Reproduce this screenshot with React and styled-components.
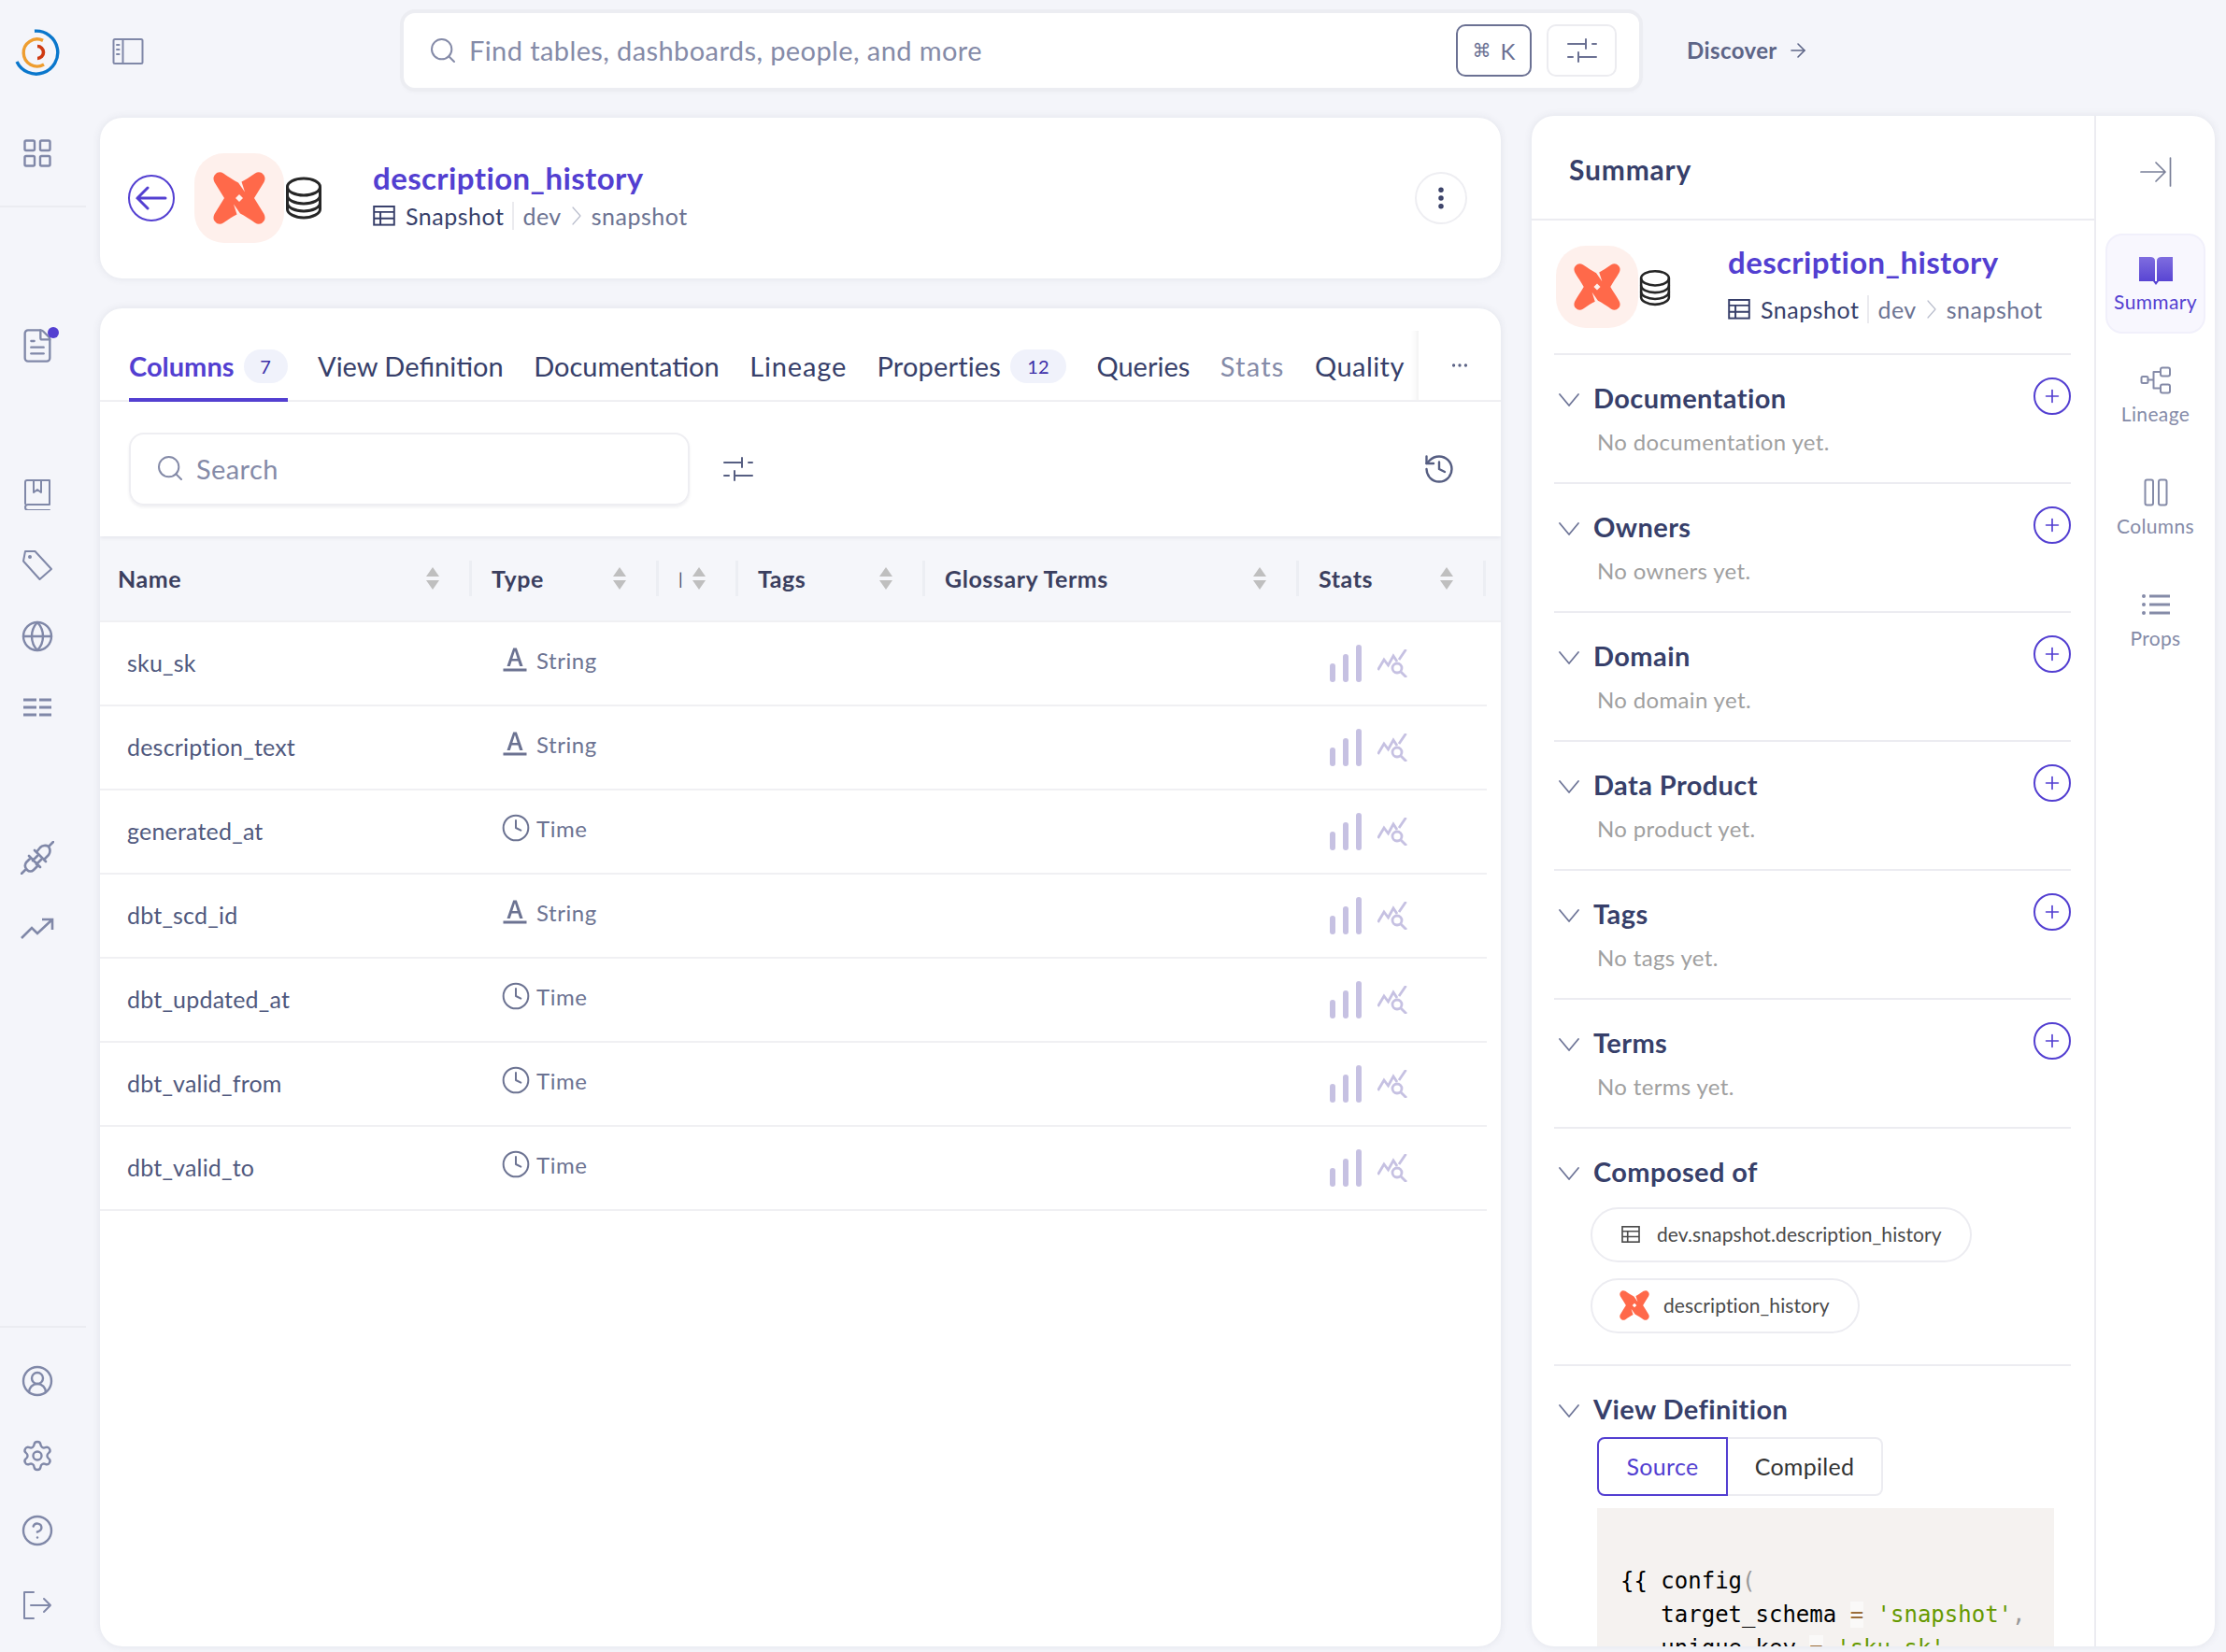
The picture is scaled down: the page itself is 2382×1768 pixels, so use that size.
import React from 'react';
import styled, {createGlobalStyle} from 'styled-components';
import {AiOutlineFontColors} from 'react-icons/ai';
import {ArrowRight, CircleHelp, CircleUserRound, Clock, Ellipsis, EllipsisVertical, FileText, Globe, History, LayoutGrid, Plus, Search, Settings} from 'lucide-react';

const PRIMARY = '#533fd1';
const INK = '#373f6a';
const ICON = '#8088a8';
const LINE = '#f0f0f3';
const COLUMNS = '398px 200px 85px 200px 400px 200px';
const UI_FONT = '"Lato", "Noto Sans", sans-serif';

const GlobalStyle = createGlobalStyle`
    html, body { margin: 0; padding: 0; background: #f4f5fa; }
    body { font-family: ${UI_FONT}; }
    * { box-sizing: border-box; }
`;

const Stroke = ({size = 32, w, h, width = 2, color = 'currentColor', cap = 'round', join = 'round', children, view = '0 0 32 32'}) => (
    <svg width={w || size} height={h || size} viewBox={view} fill="none" stroke={color} strokeWidth={width} strokeLinecap={cap} strokeLinejoin={join}>{children}</svg>
);

const DbtMark = ({size = 56}) => (
    <svg width={size} height={size} viewBox="0 0 56 56" fill="#ff694a" fillRule="evenodd">
        <path d="M2.5 2.500C4.500 0 8 -.5 11 1.500C17 5.500 22 9 27 11.500L34 21.500L30.500 10.500C35 8.500 39 5.500 45 1.500C48 -.5 51.500 0 53.500 2.500C56 5 56 8 54.500 11C51 17 47.500 22 44 28C47.500 34 51 39 54.500 45C56 48 56 51 53.500 53.500C51.500 56 48 56.500 45 54.500C39 50.500 34 47 29 44.500L22 34.500L25.500 45.500C21 47.500 17 50.500 11 54.500C8 56.500 4.500 56 2.500 53.500C0 51 0 48 1.500 45C5 39 8.500 34 12 28C8.500 22 5 17 1.500 11C0 8 0 5 2.500 2.500ZM28 24L32 28L28 32L24 28Z"/>
    </svg>
);
const Logo = () => (
    <svg width="50" height="50" viewBox="0 0 50 50" fill="none" strokeLinecap="butt">
        <path d="M22 2.200 A23 23 0 1 1 3 35" stroke="#0a77cc" strokeWidth="3.4"/>
        <path d="M31 12.400 A14.500 14.500 0 1 0 32 38" stroke="#ee9d2f" strokeWidth="3.4"/>
        <path d="M25 18.500 A6.500 6.500 0 0 1 25 31.500" stroke="#cf3a12" strokeWidth="3.6"/>
    </svg>
);
const PanelIcon = () => (
    <Stroke w={34} h={30} view="0 0 34 30">
        <rect x="1.500" y="2" width="31" height="26" rx="1.500"/>
        <path d="M11.500 2v26M5 8h2.500M5 13h2.500M5 18h2.500"/>
    </Stroke>
);
const SavedIcon = () => (
    <Stroke w={30} h={34} view="0 0 30 34">
        <path d="M2 27V4a2 2 0 0 1 2-2h24v26H5a3 3 0 0 0 0 6h23"/>
        <path d="M11 3v12l4-3 4 3V3"/>
    </Stroke>
);
const TagIcon = () => (
    <Stroke w={36} h={36} view="0 0 36 36">
        <path d="M5 3h10.500L33 22 20.500 33 3 13.500Z"/>
        <circle cx="10" cy="9" r="1"/>
    </Stroke>
);
const GlossaryIcon = () => (
    <Stroke w={30} h={20} view="0 0 30 20" width={2.8} cap="butt">
        <path d="M0 2h14M17 2h13M0 10h14M17 10h13M0 18h14M17 18h13"/>
    </Stroke>
);
const PlugIcon = () => (
    <Stroke w={36} h={36} view="0 0 36 36" width={2.6}>
        <path d="M9 16L21 28M11 18L6 23C4 26 5 29 7 31C9 33 12 33 14 31L19 26M1 35L6 30M13 21L18 16M17 25L22 20"/>
        <path d="M15 10L27 22M17 12L21 7C23 5 27 4 30 6C32 9 32 12 30 15L25 20M35 1L30 6"/>
    </Stroke>
);
const TrendIcon = () => (
    <Stroke w={36} h={24} view="0 0 36 24" width={2.6} join="miter" cap="butt">
        <path d="M1 22L12 11L18 17L34 2M23 2H34V13"/>
    </Stroke>
);
const LogoutIcon = () => (
    <Stroke w={32} h={32} view="0 0 32 32">
        <path d="M12 2H2v28h10M9 16h21M23 9l7 7-7 7"/>
    </Stroke>
);
const Database = ({w = 40, h = 46}) => (
    <svg width={w} height={h} viewBox="0 0 40 46" fill="none" stroke="#262626" strokeWidth="3">
        <ellipse cx="20" cy="11" rx="17.500" ry="9"/>
        <path d="M2.500 11v24c0 4.400 7.800 9 17.500 9s17.500-4.600 17.500-9V11"/>
        <path d="M2.500 20c0 5 7.800 9 17.500 9s17.500-4 17.500-9M2.500 28c0 5 7.800 9 17.500 9s17.500-4 17.500-9"/>
    </svg>
);
const TableIcon = ({size = 24}) => (
    <svg width={size} height={size * 0.9} viewBox="0 0 24 22" fill="none" stroke="currentColor" strokeWidth="2">
        <rect x="1" y="1" width="22" height="20"/>
        <path d="M1 7h22M1 14h22M8 7v14"/>
    </svg>
);
const SliderIcon = () => (
    <Stroke w={32} h={26} view="0 0 32 26">
        <path d="M1 6h19M20 1v10M27 6h4M1 20h5M12 15v10M12 20h19"/>
    </Stroke>
);
const Crumb = () => (
    <Stroke w={10} h={20} view="0 0 10 20" width={1.200} color="#b9bdcc">
        <path d="M1 1l8 9-8 9"/>
    </Stroke>
);
const SortCaret = () => (
    <svg width="16" height="24" viewBox="0 0 16 24" fill="#bfbfbf">
        <path d="M8 0l7 10H1ZM8 24L1 14h14Z"/>
    </svg>
);
const BarsIcon = () => (
    <svg width="34" height="40" viewBox="0 0 34 40" fill="#c6c1e2">
        <rect x="0" y="20" width="6" height="20" rx="3"/>
        <rect x="14" y="10" width="6" height="30" rx="3"/>
        <rect x="28" y="0" width="6" height="40" rx="3"/>
    </svg>
);
const ProfileIcon = () => (
    <Stroke w={32} h={30} view="0 0 32 30" width={2.800} color="#c6c1e2" cap="butt" join="miter">
        <path d="M.5 22L7 11l4.500 6L17 7l4 6M23 11l7.500-11"/>
        <circle cx="21" cy="20" r="5"/>
        <path d="M25 24l6 6"/>
    </Stroke>
);
const Chevron = () => (
    <Stroke w={22} h={14} view="0 0 22 14" width={1.800} color="#6f7698">
        <path d="M1 1l10 12L21 1"/>
    </Stroke>
);
const BookFill = () => (
    <svg width="36" height="30" viewBox="0 0 36 30">
        <defs>
            <linearGradient id="bookFill" x1="0" y1="0" x2="0" y2="1">
                <stop offset="0" stopColor="#7f6ddf"/>
                <stop offset="1" stopColor={PRIMARY}/>
            </linearGradient>
        </defs>
        <path fill="url(#bookFill)" d="M0 0h12c3 0 5 1.500 5 4v22H0ZM36 0H24c-3 0-5 1.500-5 4v22h17ZM15 26h6l-3 4Z"/>
    </svg>
);
const LineageIcon = () => (
    <Stroke w={34} h={30} view="0 0 34 30">
        <rect x="1.500" y="11" width="7" height="7" rx="1.500"/>
        <rect x="22" y="1.500" width="10" height="9" rx="2"/>
        <rect x="22" y="19.500" width="10" height="9" rx="2"/>
        <path d="M8.500 14.500h6M14.500 6v17.500M14.500 6H22M14.500 23.500H22"/>
    </Stroke>
);
const ColumnsIcon = () => (
    <Stroke w={26} h={30} view="0 0 26 30">
        <rect x="1.500" y="1.500" width="8.500" height="27" rx="2"/>
        <rect x="16" y="1.500" width="8.500" height="27" rx="2"/>
    </Stroke>
);
const PropsIcon = () => (
    <svg width="30" height="22" viewBox="0 0 30 22" fill="currentColor">
        <circle cx="2" cy="2" r="2"/>
        <circle cx="2" cy="11" r="2"/>
        <circle cx="2" cy="20" r="2"/>
        <rect x="8" y=".5" width="22" height="3"/>
        <rect x="8" y="9.500" width="22" height="3"/>
        <rect x="8" y="18.500" width="22" height="3"/>
    </svg>
);
const CollapseIcon = () => (
    <Stroke w={34} h={32} view="0 0 34 32" width={1.700}>
        <path d="M1 16h26M17 6l10 10-10 10M32.500 1v30"/>
    </Stroke>
);

const Page = styled.div`
    display: flex;
    width: 2382px;
    height: 1768px;
    overflow: hidden;
    background: #f4f5fa;
`;
const Sidebar = styled.nav`
    flex: 0 0 107px;
    display: flex;
    flex-direction: column;
    color: ${ICON};
`;
const LogoCell = styled.div`
    flex: 0 0 112px;
    width: 80px;
    display: flex;
    align-items: center;
    justify-content: center;
`;
const SideItem = styled.div`
    flex: 0 0 ${props => props.$h || 76}px;
    width: 80px;
    display: flex;
    align-items: center;
    justify-content: center;
    margin-top: ${props => props.$top || 0}px;
`;
const SideRule = styled.hr`
    width: 92px;
    height: 2px;
    border: 0;
    flex: 0 0 2px;
    margin: ${props => props.$top || 0}px 0 ${props => props.$bottom || 0}px;
    background: #ebecf1;
`;
const SideSpacer = styled.div`
    flex: 1;
`;
const SideFoot = styled.div`
    flex: 0 0 10px;
`;
const DotWrap = styled.span`
    position: relative;
    display: flex;
`;
const Dot = styled.span`
    position: absolute;
    top: 0;
    right: -3px;
    width: 12px;
    height: 12px;
    border-radius: 50%;
    background: ${PRIMARY};
`;

const Body = styled.div`
    flex: 1;
    min-width: 0;
    display: flex;
    flex-direction: column;
`;
const TopBar = styled.header`
    flex: 0 0 124px;
    display: flex;
    align-items: flex-start;
    padding-top: 14px;
`;
const PanelToggle = styled.div`
    margin: 26px 278px 0 13px;
    color: ${ICON};
    display: flex;
`;
const GlobalSearch = styled.div`
    width: 1322px;
    height: 80px;
    display: flex;
    align-items: center;
    padding: 0 24px 0 26px;
    background: #fff;
    border-radius: 12px;
    box-shadow: 0 0 0 4px #ecedf2, 0 3px 6px rgba(60, 64, 90, .06);
    color: #858ba8;
`;
const SearchText = styled.span`
    flex: 1;
    margin-left: 12px;
    padding-bottom: 2px;
    font-size: 29px;
    letter-spacing: .4px;
    color: #858ba8;
`;
const Shortcut = styled.span`
    width: 81px;
    height: 56px;
    display: flex;
    align-items: center;
    justify-content: center;
    gap: 10px;
    border: 2px solid #6b7193;
    border-radius: 10px;
    font-size: 24px;
    color: #6b7193;
`;
const ShortcutGlyph = styled.span`
    font-family: "DejaVu Sans", sans-serif;
    font-size: 20px;
`;
const FilterButton = styled.span`
    width: 75px;
    height: 56px;
    margin-left: 16px;
    display: flex;
    align-items: center;
    justify-content: center;
    border: 2px solid #ececf0;
    border-radius: 10px;
    color: #6b7193;
`;
const Discover = styled.div`
    margin: 25px 0 0 51px;
    display: flex;
    align-items: center;
    gap: 10px;
    font-size: 24px;
    font-weight: 700;
    letter-spacing: .4px;
    color: #5d6587;
`;

const Content = styled.div`
    flex: 1;
    min-height: 0;
    display: flex;
    gap: 33px;
    padding: 0 12px 6px 0;
`;
const LeftColumn = styled.main`
    flex: 0 0 1499px;
    display: flex;
    flex-direction: column;
    gap: 32px;
    padding-top: 2px;
`;
const Card = styled.section`
    background: #fff;
    border-radius: 24px;
    box-shadow: 0 0 8px rgba(60, 64, 90, .1);
`;
const HeaderCard = styled(Card)`
    flex: 0 0 172px;
    display: flex;
    align-items: center;
    padding: 0 36px 0 30px;
`;
const BackButton = styled.span`
    flex: 0 0 50px;
    height: 50px;
    display: flex;
    align-items: center;
    justify-content: center;
    border: 2px solid ${PRIMARY};
    border-radius: 50%;
    color: ${PRIMARY};
`;
const LogoTile = styled.span`
    flex: 0 0 ${props => props.$size || 96}px;
    height: ${props => props.$size || 96}px;
    margin-left: ${props => props.$left || 0}px;
    display: flex;
    align-items: center;
    justify-content: center;
    border-radius: 32px;
    background: #fef0ec;
`;
const DbBox = styled.span`
    flex: 0 0 auto;
    display: flex;
    margin-left: 1px;
    margin-top: ${props => props.$top || 0}px;
`;
const EntityText = styled.div`
    margin-left: ${props => props.$left}px;
    margin-top: ${props => props.$top || 0}px;
    padding-bottom: ${props => props.$bottom || 0}px;
    flex: 1;
`;
const EntityName = styled.div`
    font-size: 33px;
    font-weight: 700;
    line-height: 42px;
    letter-spacing: .4px;
    color: ${PRIMARY};
`;
const Crumbs = styled.div`
    display: flex;
    align-items: center;
    height: 36px;
    margin-top: ${props => props.$top || 0}px;
    font-size: 25px;
    letter-spacing: .5px;
    color: #6c7392;
`;
const CrumbKind = styled.span`
    display: flex;
    align-items: center;
    gap: 11px;
    padding-right: 9px;
    border-right: 2px solid #ebebef;
    margin-right: 9px;
    color: ${INK};
`;
const CrumbGap = styled.span`
    margin: 0 11px;
    display: flex;
`;
const KebabButton = styled.span`
    flex: 0 0 56px;
    height: 56px;
    display: flex;
    align-items: center;
    justify-content: center;
    border: 2px solid #eeeef2;
    border-radius: 50%;
    color: #3a4168;
`;

const MainCard = styled(Card)`
    flex: 1;
    min-height: 0;
    overflow: hidden;
`;
const TabBar = styled.div`
    height: 100px;
    display: flex;
    align-items: flex-end;
    border-bottom: 2px solid ${LINE};
`;
const TabList = styled.div`
    width: 1411px;
    height: 74px;
    display: flex;
    gap: 32.500px;
    padding-left: 31px;
    box-shadow: inset -10px 0 10px -10px rgba(0, 0, 0, .1);
`;
const Tab = styled.div`
    display: flex;
    align-items: center;
    gap: 10px;
    height: 76px;
    padding-top: 3px;
    font-size: 29px;
    letter-spacing: ${props => props.$track || 0}px;
    font-weight: ${props => props.$active ? 700 : 400};
    color: ${props => props.$active ? PRIMARY : props.$muted ? '#858ba8' : INK};
    border-bottom: 4px solid ${props => props.$active ? PRIMARY : 'transparent'};
`;
const TabCount = styled.span`
    min-width: ${props => props.$wide ? 60 : 47}px;
    height: 36px;
    display: flex;
    align-items: center;
    justify-content: center;
    border-radius: 18px;
    background: #f0f2fb;
    font-size: 20px;
    font-weight: 400;
    letter-spacing: 0;
    color: #3d2fa8;
`;
const TabMore = styled.div`
    flex: 1;
    height: 74px;
    display: flex;
    align-items: center;
    justify-content: center;
    color: #565e82;
`;
const SearchRow = styled.div`
    height: 144px;
    display: flex;
    align-items: center;
    padding: 0 48px 0 31px;
    box-shadow: 0 2px 4px rgba(60, 64, 90, .08);
    position: relative;
`;
const SearchBox = styled.div`
    width: 600px;
    height: 78px;
    display: flex;
    align-items: center;
    gap: 12px;
    padding: 0 0 2px 26px;
    border: 2px solid #eeeef2;
    border-radius: 16px;
    box-shadow: 0 2px 3px rgba(60, 64, 90, .08);
    font-size: 29px;
    letter-spacing: .4px;
    color: #858ba8;
`;
const SliderBox = styled.div`
    margin-left: 36px;
    display: flex;
    color: #565e82;
`;
const HistoryBox = styled.div`
    margin-left: auto;
    display: flex;
    color: #565e82;
`;
const HeadRow = styled.div`
    height: 92px;
    display: grid;
    grid-template-columns: ${COLUMNS} 1fr;
    align-items: center;
    background: #f5f6fa;
    border-bottom: 2px solid ${LINE};
`;
const HeadCell = styled.div`
    display: flex;
    align-items: center;
    height: 38px;
    padding-left: ${props => props.$left || 21}px;
    font-size: 25px;
    letter-spacing: .55px;
    color: #3b3f5f;
`;
const HeadLabel = styled.span`
    flex: 1;
    font-weight: ${props => props.$thin ? 400 : 700};
    font-size: ${props => props.$thin ? 18 : 25}px;
`;
const HeadDivider = styled.span`
    width: 3px;
    height: 38px;
    margin-left: 31px;
    background: #eceef3;
`;
const Row = styled.div`
    width: 1484px;
    height: 90px;
    display: grid;
    grid-template-columns: ${COLUMNS};
    align-items: center;
    border-bottom: 2px solid ${LINE};
`;
const NameCell = styled.div`
    padding: 0 0 2px 29px;
    font-size: 25px;
    letter-spacing: .2px;
    color: #50597e;
`;
const TypeCell = styled.div`
    display: flex;
    align-items: center;
    gap: ${props => props.$clock ? 6 : 7}px;
    padding: 0 0 8px ${props => props.$clock ? 31 : 30}px;
    font-size: 24px;
    letter-spacing: .55px;
    color: #6c7392;
`;
const StatCell = styled.div`
    grid-column: 6;
    display: flex;
    align-items: center;
    gap: 17px;
    padding-left: 33px;
`;

const SidePanel = styled(Card)`
    flex: 1;
    min-width: 0;
    display: flex;
    overflow: hidden;
`;
const SummaryColumn = styled.div`
    flex: 0 0 604px;
    border-right: 2px solid #ececf1;
    overflow: hidden;
`;
const SummaryHead = styled.div`
    height: 112px;
    display: flex;
    align-items: center;
    padding: 3px 0 0 40px;
    border-bottom: 2px solid #ececf1;
    font-size: 30px;
    font-weight: 700;
    letter-spacing: .8px;
    color: ${INK};
`;
const SummaryBody = styled.div`
    padding: 0 25px 0 24px;
`;
const EntityRow = styled.div`
    height: 144px;
    display: flex;
    align-items: flex-start;
    padding-top: 27px;
    border-bottom: 2px solid #ececf1;
`;
const EntityIcons = styled.div`
    display: flex;
    padding-left: 2px;
`;
const Block = styled.div`
    height: ${props => props.$h ? `${props.$h}px` : 'auto'};
    padding-top: 24px;
    border-bottom: ${props => props.$last ? 0 : '2px solid #ececf1'};
`;
const BlockHead = styled.div`
    height: 40px;
    display: flex;
    align-items: center;
    padding-left: 5px;
`;
const ChevronBox = styled.span`
    display: flex;
    margin-top: 7px;
`;
const BlockTitle = styled.h3`
    flex: 1;
    margin: 3px 0 0 15px;
    font-size: 29px;
    font-weight: 700;
    letter-spacing: .4px;
    color: ${INK};
`;
const AddButton = styled.span`
    flex: 0 0 40px;
    height: 40px;
    display: flex;
    align-items: center;
    justify-content: center;
    border: 2px solid ${PRIMARY};
    border-radius: 50%;
    color: ${PRIMARY};
`;
const EmptyText = styled.p`
    margin: 14px 0 0 46px;
    font-size: 24px;
    line-height: 30px;
    letter-spacing: .35px;
    color: #a0a0a0;
`;
const ChipList = styled.div`
    display: flex;
    flex-direction: column;
    align-items: flex-start;
    gap: 17px;
    margin-top: 20px;
    padding: 0 0 33px 39px;
`;
const Chip = styled.div`
    height: 59px;
    display: flex;
    align-items: center;
    gap: ${props => props.$gap}px;
    padding: 0 ${props => props.$right}px 2px ${props => props.$left}px;
    border: 2px solid #ececf1;
    border-radius: 30px;
    font-size: 21px;
    letter-spacing: .1px;
    color: #4a4a4a;
`;
const Toggle = styled.div`
    display: flex;
    height: 63px;
    margin: 12px 0 0 46px;
`;
const ToggleItem = styled.div`
    width: ${props => props.$w}px;
    display: flex;
    align-items: center;
    justify-content: center;
    padding-bottom: 1px;
    font-size: 25px;
    letter-spacing: .3px;
    color: ${props => props.$active ? PRIMARY : '#333'};
    border: 2px solid ${props => props.$active ? PRIMARY : '#ececf1'};
    border-left-width: ${props => props.$active ? 2 : 0}px;
    border-radius: ${props => props.$active ? '8px 0 0 8px' : '0 8px 8px 0'};
`;
const CodeBlock = styled.pre`
    width: 489px;
    height: 200px;
    margin: 13px 0 0 46px;
    padding: 24px 0 0 25px;
    overflow: hidden;
    background: #f5f2f0;
    font-family: "DejaVu Sans Mono", monospace;
    font-size: 24px;
    line-height: 36px;
    color: #000;
`;
const Paren = styled.span`
    color: #999;
`;
const Op = styled.span`
    color: #9a6e3a;
    background: rgba(255, 255, 255, .5);
`;
const Str = styled.span`
    color: #669900;
`;

const Rail = styled.aside`
    flex: 1;
    padding: 0 10px;
    display: flex;
    flex-direction: column;
    align-items: stretch;
`;
const RailTop = styled.div`
    height: 126px;
    display: flex;
    align-items: center;
    justify-content: center;
    padding-bottom: 6px;
    color: #7a8099;
`;
const RailItem = styled.div`
    height: 107px;
    margin-bottom: 13px;
    display: flex;
    flex-direction: column;
    align-items: center;
    padding-top: ${props => props.$active ? 23 : 20}px;
    border: 2px solid ${props => props.$active ? '#f1f0fb' : 'transparent'};
    border-radius: 18px;
    background: ${props => props.$active ? '#f8f7fe' : 'transparent'};
    color: ${props => props.$active ? PRIMARY : '#858ba8'};
`;
const RailIconBox = styled.span`
    height: 30px;
    display: flex;
    align-items: center;
`;
const RailLabel = styled.span`
    margin-top: ${props => props.$active ? 5 : 8}px;
    font-size: 21px;
    line-height: 26px;
    letter-spacing: .35px;
`;

const COLUMN_ROWS = [
    ['sku_sk', 'String'],
    ['description_text', 'String'],
    ['generated_at', 'Time'],
    ['dbt_scd_id', 'String'],
    ['dbt_updated_at', 'Time'],
    ['dbt_valid_from', 'Time'],
    ['dbt_valid_to', 'Time']
];
const HEADS = ['Name', 'Type', '|', 'Tags', 'Glossary Terms', 'Stats'];
const EMPTY_BLOCKS = [
    ['Documentation', 'No documentation yet.'],
    ['Owners', 'No owners yet.'],
    ['Domain', 'No domain yet.'],
    ['Data Product', 'No product yet.'],
    ['Tags', 'No tags yet.'],
    ['Terms', 'No terms yet.']
];
const RAIL_ITEMS = [
    ['Summary', <BookFill/>],
    ['Lineage', <LineageIcon/>],
    ['Columns', <ColumnsIcon/>],
    ['Props', <PropsIcon/>]
];

const TypeTag = ({type}) => (
    type === 'Time'
        ? <TypeCell $clock><Clock size={32} strokeWidth={1.500}/>{type}</TypeCell>
        : <TypeCell><AiOutlineFontColors size={32}/>{type}</TypeCell>
);

const EntityCrumbs = ({top}) => (
    <Crumbs $top={top}>
        <CrumbKind><TableIcon/>Snapshot</CrumbKind>
        dev
        <CrumbGap><Crumb/></CrumbGap>
        snapshot
    </Crumbs>
);

const SectionHead = ({title, children}) => (
    <BlockHead>
        <ChevronBox><Chevron/></ChevronBox>
        <BlockTitle>{title}</BlockTitle>
        {children}
    </BlockHead>
);

export default function App() {
    return (
        <Page>
            <GlobalStyle/>
            <Sidebar>
                <LogoCell><Logo/></LogoCell>
                <SideItem $top={14}><LayoutGrid size={36} strokeWidth={1.600}/></SideItem>
                <SideRule $top={18}/>
                <SideItem $top={110}><DotWrap><FileText size={40} strokeWidth={1.400}/><Dot/></DotWrap></SideItem>
                <SideItem $top={83}><SavedIcon/></SideItem>
                <SideItem><TagIcon/></SideItem>
                <SideItem><Globe size={36} strokeWidth={1.600}/></SideItem>
                <SideItem><GlossaryIcon/></SideItem>
                <SideItem $top={85}><PlugIcon/></SideItem>
                <SideItem><TrendIcon/></SideItem>
                <SideSpacer/>
                <SideRule $bottom={17}/>
                <SideItem $h={80}><CircleUserRound size={36} strokeWidth={1.600}/></SideItem>
                <SideItem $h={80}><Settings size={36} strokeWidth={1.600}/></SideItem>
                <SideItem $h={80}><CircleHelp size={36} strokeWidth={1.600}/></SideItem>
                <SideItem $h={80}><LogoutIcon/></SideItem>
                <SideFoot/>
            </Sidebar>
            <Body>
                <TopBar>
                    <PanelToggle><PanelIcon/></PanelToggle>
                    <GlobalSearch>
                        <Search size={32} strokeWidth={1.500}/>
                        <SearchText>Find tables, dashboards, people, and more</SearchText>
                        <Shortcut><ShortcutGlyph>⌘</ShortcutGlyph>K</Shortcut>
                        <FilterButton><SliderIcon/></FilterButton>
                    </GlobalSearch>
                    <Discover>Discover <ArrowRight size={24} strokeWidth={1.600}/></Discover>
                </TopBar>
                <Content>
                    <LeftColumn>
                        <HeaderCard>
                            <BackButton>
                                <svg width="34" height="26" viewBox="0 0 34 26" fill="none" stroke="currentColor" strokeWidth="3" strokeLinecap="round"><path d="M2 13h30M13 2L2 13l11 11"/></svg>
                            </BackButton>
                            <LogoTile $left={21}><DbtMark/></LogoTile>
                            <DbBox><Database/></DbBox>
                            <EntityText $left={54} $bottom={6}>
                                <EntityName>description_history</EntityName>
                                <EntityCrumbs top={2}/>
                            </EntityText>
                            <KebabButton><EllipsisVertical size={30} strokeWidth={2.400}/></KebabButton>
                        </HeaderCard>
                        <MainCard>
                            <TabBar>
                                <TabList>
                                    <Tab $active>Columns <TabCount>7</TabCount></Tab>
                                    <Tab>View Definition</Tab>
                                    <Tab>Documentation</Tab>
                                    <Tab $track={.85}>Lineage</Tab>
                                    <Tab $track={.15}>Properties <TabCount $wide>12</TabCount></Tab>
                                    <Tab>Queries</Tab>
                                    <Tab $muted $track={1.2}>Stats</Tab>
                                    <Tab $track={.45}>Quality</Tab>
                                </TabList>
                                <TabMore><Ellipsis size={22} strokeWidth={1.600}/></TabMore>
                            </TabBar>
                            <SearchRow>
                                <SearchBox><Search size={32} strokeWidth={1.500}/>Search</SearchBox>
                                <SliderBox><SliderIcon/></SliderBox>
                                <HistoryBox><History size={36} strokeWidth={1.600}/></HistoryBox>
                            </SearchRow>
                            <HeadRow>
                                {HEADS.map((head, i) => (
                                    <HeadCell key={head} $left={i === 0 ? 19 : 21}>
                                        <HeadLabel $thin={head === '|'}>{head}</HeadLabel>
                                        <SortCaret/>
                                        <HeadDivider/>
                                    </HeadCell>
                                ))}
                            </HeadRow>
                            {COLUMN_ROWS.map(([name, type]) => (
                                <Row key={name}>
                                    <NameCell>{name}</NameCell>
                                    <TypeTag type={type}/>
                                    <StatCell><BarsIcon/><ProfileIcon/></StatCell>
                                </Row>
                            ))}
                        </MainCard>
                    </LeftColumn>
                    <SidePanel>
                        <SummaryColumn>
                            <SummaryHead>Summary</SummaryHead>
                            <SummaryBody>
                                <EntityRow>
                                    <EntityIcons>
                                        <LogoTile $size={88}><DbtMark size={50}/></LogoTile>
                                        <DbBox $top={25}><Database w={34} h={40}/></DbBox>
                                    </EntityIcons>
                                    <EntityText $left={61} $top={-4}>
                                        <EntityName>description_history</EntityName>
                                        <EntityCrumbs top={12}/>
                                    </EntityText>
                                </EntityRow>
                                {EMPTY_BLOCKS.map(([title, text]) => (
                                    <Block key={title} $h={138}>
                                        <SectionHead title={title}>
                                            <AddButton><Plus size={22} strokeWidth={1.800}/></AddButton>
                                        </SectionHead>
                                        <EmptyText>{text}</EmptyText>
                                    </Block>
                                ))}
                                <Block>
                                    <SectionHead title="Composed of"/>
                                    <ChipList>
                                        <Chip $left={31} $right={30} $gap={18}><TableIcon size={20}/>dev.snapshot.description_history</Chip>
                                        <Chip $left={29} $right={30} $gap={15}><DbtMark size={32}/>description_history</Chip>
                                    </ChipList>
                                </Block>
                                <Block $last>
                                    <SectionHead title="View Definition"/>
                                    <Toggle>
                                        <ToggleItem $active $w={140}>Source</ToggleItem>
                                        <ToggleItem $w={166}>Compiled</ToggleItem>
                                    </Toggle>
                                    <CodeBlock>{'\n{{ config'}<Paren>(</Paren>{'\n   target_schema '}<Op>=</Op> <Str>'snapshot'</Str><Paren>,</Paren>{'\n   unique_key '}<Op>=</Op> <Str>'sku_sk'</Str><Paren>,</Paren></CodeBlock>
                                </Block>
                            </SummaryBody>
                        </SummaryColumn>
                        <Rail>
                            <RailTop><CollapseIcon/></RailTop>
                            {RAIL_ITEMS.map(([label, icon], i) => (
                                <RailItem key={label} $active={i === 0}>
                                    <RailIconBox>{icon}</RailIconBox>
                                    <RailLabel $active={i === 0}>{label}</RailLabel>
                                </RailItem>
                            ))}
                        </Rail>
                    </SidePanel>
                </Content>
            </Body>
        </Page>
    );
}
